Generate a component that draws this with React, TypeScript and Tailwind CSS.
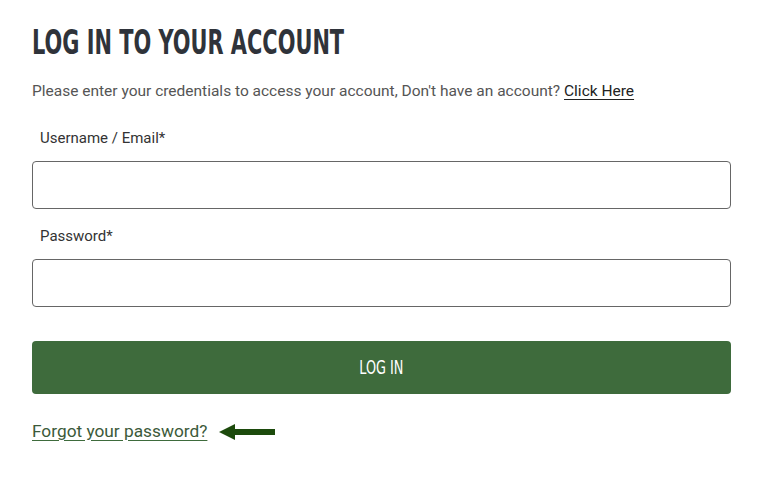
export default function App() {
  return (
    <main className="min-h-screen bg-white pl-8 pr-[35px] pt-[22px] font-['Roboto',sans-serif]">
      <h1 className="h-[40px] font-['DejaVu_Sans_Condensed',sans-serif] text-[34px] font-bold uppercase leading-[40px] text-[#2f333a]">
        <span className="inline-block origin-left scale-x-[0.683] whitespace-nowrap">Log in to your account</span>
      </h1>
      <p className="mt-[19px] text-[15.5px] leading-5 text-[#555]">
        Please enter your credentials to access your account, Don't have an account?{' '}
        <a href="#" className="text-[#222] underline underline-offset-[3px]">
          Click Here
        </a>
      </p>
      <form className="mt-[27px] flex flex-col">
        <label className="pl-2 text-[15px] leading-5 text-[#333]">Username / Email*</label>
        <input className="mt-[13px] h-[48px] w-full rounded-[4px] border border-[#666] px-3 outline-none" />
        <label className="mt-[17px] pl-2 text-[15px] leading-5 text-[#333]">Password*</label>
        <input type="password" className="mt-[13px] h-[48px] w-full rounded-[4px] border border-[#666] px-3 outline-none" />
        <button
          type="button"
          className="mt-[34px] h-[53px] w-full rounded-[4px] bg-[#3e6b3c] font-['DejaVu_Sans_Condensed',sans-serif] text-[19px] uppercase text-white"
        >
          <span className="inline-block scale-x-[0.75]">Log in</span>
        </button>
      </form>
      <div className="mt-[25px] flex items-center gap-3">
        <a href="#" className="text-[17.3px] leading-6 text-[#3c5a3a] underline decoration-[#3e6b3c] underline-offset-[3px]">
          Forgot your password?
        </a>
        <svg width="56" height="16" viewBox="0 0 56 16" className="mt-[1px]">
          <rect x="14" y="5" width="42" height="6" fill="#1c4a0c" />
          <polygon points="0,8 16,0 16,16" fill="#1c4a0c" />
        </svg>
      </div>
    </main>
  );
}
